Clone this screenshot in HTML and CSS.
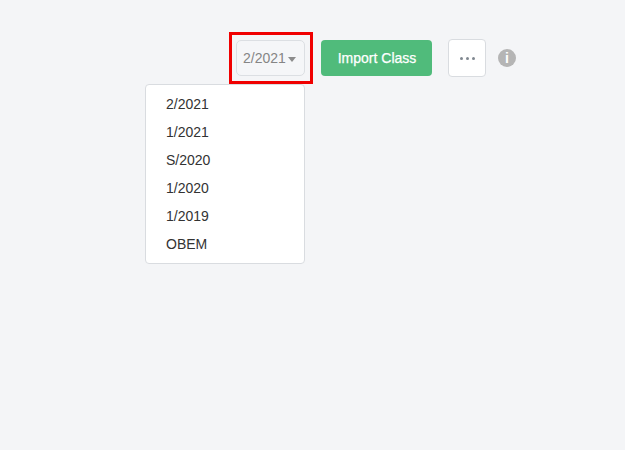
FILE: index.html
```html
<!DOCTYPE html>
<html lang="en">
<head>
  <meta charset="UTF-8" />
  <title>Classes</title>
  <link rel="stylesheet" href="styles.css">
</head>
<body>
  <div class="toolbar">
    <div class="highlight">
      <button type="button" class="term-button">
        2/2021
        <span class="caret"></span>
      </button>
    </div>
    <button type="button" class="import-button">Import Class</button>
    <button type="button" class="more-button">
      <span class="dot"></span>
      <span class="dot"></span>
      <span class="dot"></span>
    </button>
    <span class="info-icon">i</span>
  </div>
  <div class="term-list">
    <div class="term-item">2/2021</div>
    <div class="term-item">1/2021</div>
    <div class="term-item">S/2020</div>
    <div class="term-item">1/2020</div>
    <div class="term-item">1/2019</div>
    <div class="term-item">OBEM</div>
  </div>
</body>
</html>
```

FILE: styles.css
```css
body {
  font-family: 'Liberation Sans', Arial, sans-serif;
  font-size: 14px;
  background: #f4f5f7;
  margin: 0;
  padding: 32px 0 0 145px;
}

button {
  font-family: inherit;
  font-size: 14px;
  cursor: pointer;
}

.toolbar {
  display: flex;
  align-items: center;
  height: 52px;
  margin-left: 84px;
}

.highlight {
  display: flex;
  align-items: center;
  box-sizing: border-box;
  width: 84px;
  height: 52px;
  padding-left: 4px;
  border: 3px solid #f00000;
}

.term-button {
  display: flex;
  align-items: center;
  gap: 2px;
  box-sizing: border-box;
  width: 69px;
  height: 36px;
  padding: 0 0 0 6px;
  background: #f5f6f8;
  border: 1px solid #dcdfe3;
  border-radius: 5px;
  color: #858585;
}

.caret {
  width: 0;
  height: 0;
  margin-top: 2px;
  border-left: 4.5px solid transparent;
  border-right: 4.5px solid transparent;
  border-top: 5px solid #8c8c8c;
}

.import-button {
  width: 111px;
  height: 36px;
  margin-left: 8px;
  padding: 0 0 0 1px;
  background: #50bb7b;
  border: none;
  border-radius: 4px;
  color: #fff;
  -webkit-text-stroke: 0.25px #fff;
}

.more-button {
  display: flex;
  align-items: center;
  justify-content: center;
  gap: 3px;
  box-sizing: border-box;
  width: 38px;
  height: 38px;
  margin-left: 16px;
  padding: 0;
  background: #fff;
  border: 1px solid #d9dce0;
  border-radius: 4px;
}

.dot {
  width: 3px;
  height: 3px;
  background: #808890;
  border-radius: 50%;
}

.info-icon {
  width: 18px;
  height: 18px;
  margin-left: 12px;
  border-radius: 50%;
  background: #b5b5b5;
  color: #fff;
  font-size: 14px;
  font-weight: bold;
  line-height: 18px;
  text-align: center;
}

.term-list {
  box-sizing: border-box;
  width: 160px;
  height: 180px;
  padding: 5px 0;
  background: #fff;
  border: 1px solid #d9dce0;
  border-radius: 4px;
  color: #333;
}

.term-item {
  height: 28px;
  padding-left: 20px;
  line-height: 28px;
}
```
